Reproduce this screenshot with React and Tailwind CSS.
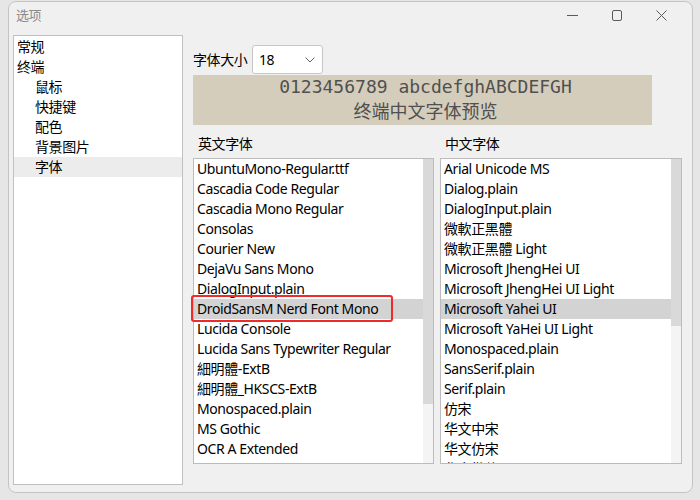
import { useState } from 'react';

const treeItems = [
  { label: '常规', indent: false },
  { label: '终端', indent: false },
  { label: '鼠标', indent: true },
  { label: '快捷键', indent: true },
  { label: '配色', indent: true },
  { label: '背景图片', indent: true },
  { label: '字体', indent: true, selected: true },
];

const enFonts = [
  'UbuntuMono-Regular.ttf',
  'Cascadia Code Regular',
  'Cascadia Mono Regular',
  'Consolas',
  'Courier New',
  'DejaVu Sans Mono',
  'DialogInput.plain',
  'DroidSansM Nerd Font Mono',
  'Lucida Console',
  'Lucida Sans Typewriter Regular',
  '細明體-ExtB',
  '細明體_HKSCS-ExtB',
  'Monospaced.plain',
  'MS Gothic',
  'OCR A Extended',
];

const zhFonts = [
  'Arial Unicode MS',
  'Dialog.plain',
  'DialogInput.plain',
  '微軟正黑體',
  '微軟正黑體 Light',
  'Microsoft JhengHei UI',
  'Microsoft JhengHei UI Light',
  'Microsoft Yahei UI',
  'Microsoft YaHei UI Light',
  'Monospaced.plain',
  'SansSerif.plain',
  'Serif.plain',
  '仿宋',
  '华文中宋',
  '华文仿宋',
  '华文楷体',
];

function FontList({ items, selected, thumb, boxed }) {
  return (
    <div className="relative flex h-[306px] border border-[#bcbcbc] bg-white">
      <div className="flex-1 overflow-hidden">
        {items.map((f) => (
          <div
            key={f}
            className={`h-5 pl-[3px] leading-5 whitespace-nowrap ${f === selected ? 'bg-[#d3d3d3]' : ''}`}
          >
            {f}
          </div>
        ))}
      </div>
      {/* scrollbar */}
      <div className="flex w-[10px] flex-col bg-[#f4f4f4]">
        <div className={`${thumb} bg-[#d9d9d9]`}></div>
      </div>
      {boxed && (
        <div className="absolute left-[-3px] top-[136px] h-[27px] w-[202px] rounded-[3px] border-2 border-[#ee2a2a]"></div>
      )}
    </div>
  );
}

export default function App() {
  const [size] = useState('18');

  return (
    <div
      className="h-[500px] w-[700px] bg-[#e6e6e6] pl-2 pt-px text-[14px] tracking-[-0.4px] text-black"
      style={{ fontFamily: '"Noto Sans", "Noto Sans CJK SC", sans-serif' }}
    >
      <div className="flex h-[492px] w-[685px] flex-col rounded-lg border border-[#c4c4c4] bg-[#f0f0f0]">
        {/* Title bar */}
        <div className="flex h-[33px] items-start pt-[3px]">
          <span className="h-5 pl-[7px] text-[13px] leading-5 text-[#8a8a8a]">选项</span>
          <div className="ml-auto flex items-center text-[#5a5a5a]">
            <svg width="46" height="20" viewBox="0 0 46 20">
              <line x1="17" y1="10.5" x2="28" y2="10.5" stroke="currentColor" strokeWidth="1" />
            </svg>
            <svg width="44" height="20" viewBox="0 0 44 20">
              <rect x="16.5" y="5.5" width="9" height="10" rx="1.5" fill="none" stroke="currentColor" strokeWidth="1" />
            </svg>
            <svg width="44" height="20" viewBox="0 0 44 20" className="mr-[8px]">
              <path d="M16.5 5.5 L26.5 15.5 M26.5 5.5 L16.5 15.5" stroke="currentColor" strokeWidth="1" />
            </svg>
          </div>
        </div>

        {/* Body */}
        <div className="flex pl-1">
          {/* Tree */}
          <div className="h-[450px] w-[170px] border border-[#c0c0c0] bg-white pt-px">
            {treeItems.map((t) => (
              <div
                key={t.label}
                className={`h-5 leading-5 ${t.indent ? 'pl-[21px]' : 'pl-[3px]'} ${t.selected ? 'bg-[#ececec]' : ''}`}
              >
                {t.label}
              </div>
            ))}
          </div>

          {/* Right side */}
          <div className="ml-[10px] flex w-[489px] flex-col">
            <div className="mt-[10px] flex h-[29px] items-center">
              <span className="w-[59px]">字体大小</span>
              <div className="flex h-[29px] w-[71px] items-center justify-between rounded-[3px] border border-[#c6c6c6] bg-white pl-[6px] pr-[6px]">
                <span>{size}</span>
                <svg width="12" height="8" viewBox="0 0 12 8">
                  <path d="M1.5 1.5 L6 6 L10.5 1.5" fill="none" stroke="#606060" strokeWidth="1" />
                </svg>
              </div>
            </div>

            <div className="mt-px flex h-[50px] w-[459px] flex-col items-center justify-center bg-[#d5cdbb] pl-[6px] text-[18px] leading-[25px] tracking-normal text-[#505050]">
              <div className="-mt-[2px]" style={{ fontFamily: '"DejaVu Sans Mono", monospace' }}>0123456789 abcdefghABCDEFGH</div>
              <div>终端中文字体预览</div>
            </div>

            <div className="mt-[9px] flex h-5 items-center leading-5">
              <span className="w-[247px] pl-[5px]">英文字体</span>
              <span className="pl-[5px]">中文字体</span>
            </div>

            <div className="mt-[4px] flex gap-[6px]">
              <div className="w-[241px]">
                <FontList items={enFonts} selected="DroidSansM Nerd Font Mono" thumb="h-[245px]" boxed />
              </div>
              <div className="w-[242px]">
                <FontList items={zhFonts} selected="Microsoft Yahei UI" thumb="h-[167px]" />
              </div>
            </div>
          </div>
        </div>
      </div>
    </div>
  );
}
